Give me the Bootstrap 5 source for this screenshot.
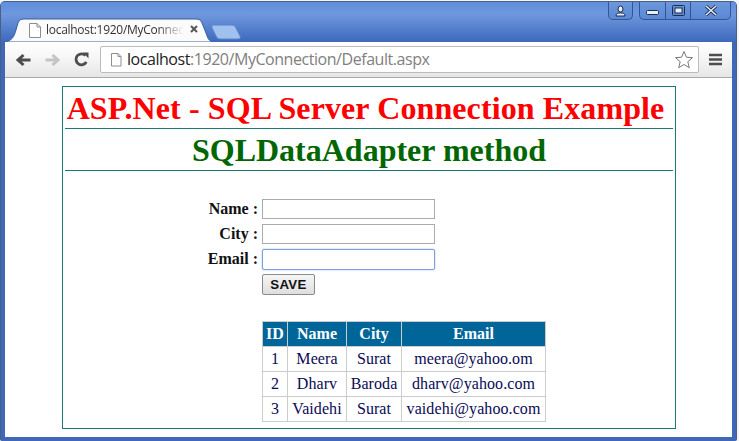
<!DOCTYPE html>
<html lang="en">
<head>
<meta charset="utf-8">
<title>SQLDataAdapter method</title>
<link href="https://cdn.jsdelivr.net/npm/bootstrap@5.3.0/dist/css/bootstrap.min.css" rel="stylesheet">
<style>
html,body{height:441px;overflow:hidden;background:#f4f5f6}
.appwin{width:737px;height:440px;margin-top:1px;padding:0 4px 3px 4px;background:#3f68b8;border:1px solid #4a5f86;border-radius:5px 5px 2px 2px;border-bottom-color:#3f68b8}
.strip{height:40px;margin:0 -4px;background:linear-gradient(#5f8edb,#6f98de 30%,#3d69bc)}
.tabone{width:209px;height:24px;margin-left:3px;position:relative;font:12px "Open Sans","Noto Sans",sans-serif;color:#333}
.tabshape{position:absolute;left:0;top:0}
.tabtext{position:relative;padding-left:42px;line-height:24px;width:180px;white-space:nowrap;overflow:hidden;-webkit-mask-image:linear-gradient(90deg,#000 85%,transparent)}
.tabtext span{letter-spacing:-.28px}
.tabicon{position:absolute;left:24px;top:5px}
.tabx{position:absolute;left:186px;top:7px}
.tabtwo{margin-left:-2px;margin-bottom:2px}
.ctlgroup{height:18px;border:1px solid #34558f;border-top:0;border-radius:0 0 5px 5px;background:linear-gradient(#6c97dc,#5a88d4)}
.ctlperson{width:25px;margin-right:6px}
.ctlgroup2{width:92px;margin-right:5px}
.ctlcell{border-right:1px solid #34558f}
.ctlmin{width:26px}.ctlmax{width:25px}.ctlclose{flex:1;border-right:0}
.toolbar{height:36px;background:linear-gradient(#fff,#f7f7f7 40%,#e6e6e6);border-bottom:1px solid #a9a9a9}
.navicons{width:95px;padding-left:11px;gap:14px}
.urlbar{width:599px;height:27px;background:#fff;border:1px solid #bcbcbc;border-radius:2px;padding:0 4px 0 8px;font:16px "Open Sans","Noto Sans",sans-serif;line-height:25px}
.urltext{letter-spacing:-.45px;color:#808080;margin-left:4px}
.urltext b{font-weight:400;color:#222}
.menuicon{margin-left:10px}
.pagearea{height:359px;background:#fff;padding:8px 0 0 57px;font-family:"Liberation Serif",serif}
.frame{width:614px;height:343px;border:1px solid #1c7a74;padding:0 2px}
.headone,.headtwo{margin:0;height:42px;line-height:43px;border-bottom:1px solid #1c7a74;text-align:center;font-family:"Liberation Serif",serif;font-weight:700;font-size:32px;white-space:nowrap}
.headone{color:#f00;padding-right:7px;letter-spacing:.1px}
.headtwo{color:#060}
.formbox{margin-top:28px;font-size:16px}
.fieldrow{height:25px}
.fieldlabel{width:193px;text-align:right;font-weight:700;color:#111;line-height:20px}
.fieldinput{width:173px;height:20px;margin-left:4px;padding:0 2px;border:1px solid #ababab;border-radius:0;outline:0;background:#fff;display:block}
.fieldfocus{height:21px;border:1px solid #7f9fd8;border-radius:2px;box-shadow:0 0 2px #9db8e8}
.savebtn{display:block;width:53px;height:21px;margin-left:197px;padding:0;border:1px solid #8a8a8a;border-radius:2px;background:linear-gradient(#f6f6f6,#dedede);font:700 13.300px "Liberation Sans",sans-serif;letter-spacing:.35px;color:#111}
.datatable{border-collapse:collapse;margin:26px 0 0 197px;width:283px;font-size:16px;color:#0a0a55;table-layout:fixed}
.datatable th,.datatable td{border:1px solid #ccc;text-align:center;padding:0;height:25px;line-height:22px;white-space:nowrap}
.datatable th{background:#069;color:#fff;font-weight:700}
.datatable td{letter-spacing:.08px}
</style>
</head>
<body>
<div class="appwin">
  <div class="strip d-flex align-items-start">
    <div class="align-self-end d-flex align-items-end">
      <div class="tabone">
        <svg class="tabshape" width="209" height="24"><path d="M0 24 C8 23 10 19 12 12 L14 5 C15 2 17 1 20 1 L192 1 C195 1 197 2 198 5 L202 15 C204 21 205 23 209 24Z" fill="#fbfbfb" stroke="#3c5f9f"/></svg>
        <svg class="tabicon" width="14" height="15" viewBox="0 0 14 15"><path d="M1.500 .5H9L12.500 4V14.500H1.500Z M9 .5V4H12.500" fill="#fff" stroke="#8e8e8e"/></svg>
        <div class="tabtext"><span>localhost:1920/MyConnec</span></div>
        <svg class="tabx" width="8" height="8" viewBox="0 0 8 8"><path d="M1 1L7 7M7 1L1 7" stroke="#555" stroke-width="2"/></svg>
      </div>
      <svg class="tabtwo" width="31" height="16" viewBox="0 0 31 16"><path d="M1 1H21C23 1 24 2 25 4L29 12C30 14 29 15 27 15H9C7 15 6 14 5 12L1 4Z" fill="#a0c0f0" stroke="#5c84c6"/></svg>
    </div>
    <div class="ms-auto d-flex">
      <div class="ctlgroup ctlperson d-flex align-items-center justify-content-center">
        <svg width="13" height="12" viewBox="0 0 13 12"><path d="M6.500 1a2.500 3 0 0 1 0 6a2.500 3 0 0 1 0-6ZM2 11C2 8.500 4 8 6.500 8S11 8.500 11 11Z" fill="#e8eef8" stroke="#1c2c50"/></svg>
      </div>
      <div class="ctlgroup ctlgroup2 d-flex">
        <div class="ctlcell ctlmin d-flex align-items-end justify-content-center pb-1"><svg width="13" height="5"><rect x=".5" y=".5" width="12" height="4" rx="1" fill="#e8eef8" stroke="#1c2c50"/></svg></div>
        <div class="ctlcell ctlmax d-flex align-items-center justify-content-center"><svg width="13" height="11"><rect x=".5" y=".5" width="12" height="10" rx="1" fill="none" stroke="#1c2c50"/><rect x="3" y="3" width="7" height="5" fill="#e8eef8" stroke="#1c2c50"/></svg></div>
        <div class="ctlcell ctlclose d-flex align-items-center justify-content-center"><svg width="14" height="11" viewBox="0 0 14 11"><path d="M2 1L12 10M12 1L2 10" stroke="#1c2c50" stroke-width="3.200"/><path d="M2 1L12 10M12 1L2 10" stroke="#e8eef8" stroke-width="1.500"/></svg></div>
      </div>
    </div>
  </div>
  <div class="toolbar d-flex align-items-center">
    <div class="navicons d-flex align-items-center">
      <svg width="15" height="14" viewBox="0 0 15 14"><path d="M14.500 7H3M7.500 2L2 7L7.500 12" fill="none" stroke="#4d4d4d" stroke-width="3"/></svg>
      <svg width="15" height="14" viewBox="0 0 15 14"><path d="M.5 7H12M7.500 2L13 7L7.500 12" fill="none" stroke="#c4c4c4" stroke-width="3"/></svg>
      <svg width="15" height="15" viewBox="0 0 15 15"><path d="M12.300 10A5.500 5.500 0 1 1 11.500 3.500" fill="none" stroke="#4d4d4d" stroke-width="2.800"/><path d="M9 .5H14.500V6.500Z" fill="#4d4d4d"/></svg>
    </div>
    <div class="urlbar d-flex align-items-center">
      <svg width="14" height="15" viewBox="0 0 14 15"><path d="M2.500 1.500H9L12 4.500V14H2.500Z M9 1.500V4.500H12" fill="#fff" stroke="#8e8e8e"/></svg>
      <span class="urltext"><b>localhost</b>:1920/MyConnection/Default.aspx</span>
      <svg class="ms-auto" width="20" height="19" viewBox="0 0 20 19"><path d="M10 1.500L12.400 7.200L18.500 7.700L13.800 11.700L15.300 17.700L10 14.500L4.700 17.700L6.200 11.700L1.500 7.700L7.600 7.200Z" fill="#fff" stroke="#777"/></svg>
    </div>
    <svg class="menuicon" width="13" height="13" viewBox="0 0 13 13"><path d="M0 2H13M0 6.500H13M0 11H13" stroke="#4d4d4d" stroke-width="2.500"/></svg>
  </div>
  <div class="pagearea">
    <div class="frame">
      <h1 class="headone">ASP.Net - SQL Server Connection Example</h1>
      <h2 class="headtwo">SQLDataAdapter method</h2>
      <form class="formbox">
        <div class="fieldrow d-flex"><label class="fieldlabel" for="f1">Name :</label><input id="f1" class="fieldinput" type="text"></div>
        <div class="fieldrow d-flex"><label class="fieldlabel" for="f2">City :</label><input id="f2" class="fieldinput" type="text"></div>
        <div class="fieldrow d-flex"><label class="fieldlabel" for="f3">Email :</label><input id="f3" class="fieldinput fieldfocus" type="text"></div>
        <button class="savebtn" type="button">SAVE</button>
      </form>
      <table class="datatable">
        <colgroup><col style="width:25px"><col style="width:59px"><col style="width:55px"><col style="width:144px"></colgroup>
        <thead><tr><th>ID</th><th>Name</th><th>City</th><th>Email</th></tr></thead>
        <tbody>
          <tr><td>1</td><td>Meera</td><td>Surat</td><td>meera@yahoo.om</td></tr>
          <tr><td>2</td><td>Dharv</td><td>Baroda</td><td>dharv@yahoo.com</td></tr>
          <tr><td>3</td><td>Vaidehi</td><td>Surat</td><td>vaidehi@yahoo.com</td></tr>
        </tbody>
      </table>
    </div>
  </div>
</div>
<script src="https://cdn.jsdelivr.net/npm/bootstrap@5.3.0/dist/js/bootstrap.bundle.min.js"></script>
</body>
</html>
